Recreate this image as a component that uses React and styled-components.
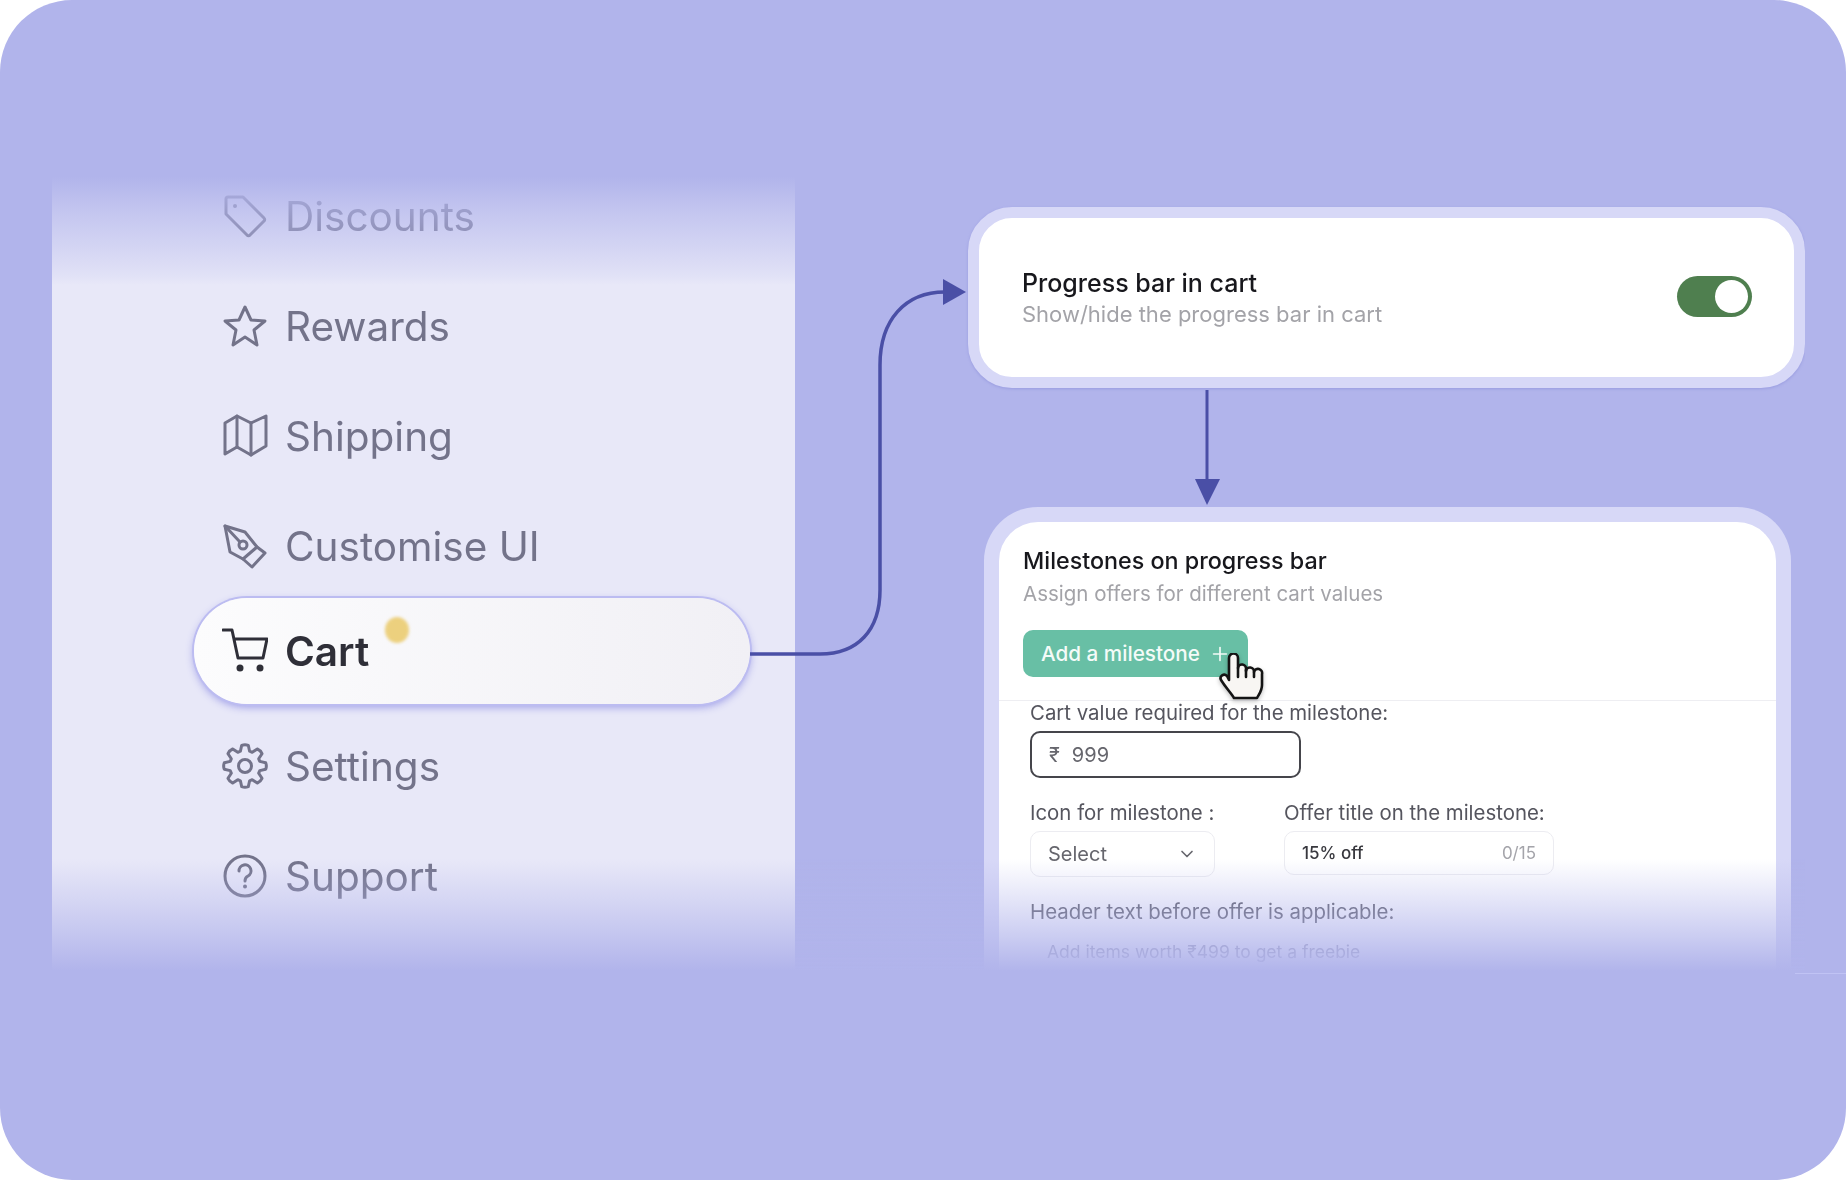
import React from "react"
import styled, { createGlobalStyle } from "styled-components"
import { ChevronDown, Plus } from "lucide-react"

const bg = "#b1b4eb"
const line = "#4a4fa6"

const Global = createGlobalStyle`
  html, body { margin: 0; padding: 0; background: #fff; }
  * { box-sizing: border-box; }
  body { font-family: Inter, "Noto Sans", sans-serif; }
`

const Frame = styled.div`
  position: relative;
  width: 1846px;
  height: 1180px;
  padding: 177px 41px 0 52px;
  background: ${bg};
  border-radius: 72px;
  overflow: hidden;
`

const Stage = styled.div`
  position: relative;
  display: flex;
  height: 794px;
  overflow: hidden;
  filter: blur(0.45px);
`

const Sidebar = styled.nav`
  position: relative;
  display: flex;
  flex-direction: column;
  width: 743px;
  flex-shrink: 0;
  padding-left: 142px;
  background: #e8e8f8;

  &::before {
    content: "";
    position: absolute;
    inset: 0 0 auto 0;
    height: 108px;
    background: linear-gradient(
      to bottom,
      ${bg},
      rgba(177, 180, 235, 0.68) 30%,
      rgba(177, 180, 235, 0.35) 68%,
      rgba(177, 180, 235, 0.12) 92%,
      rgba(177, 180, 235, 0)
    );
    z-index: 1;
  }
`

const NavItem = styled.div`
  position: relative;
  display: flex;
  align-items: center;
  gap: 17px;
  width: 556px;
  height: ${p => (p.$active ? "106px" : "80px")};
  margin-top: ${p => p.$top}px;
  padding-left: 28px;
  border-radius: 53px;
  color: ${p => (p.$active ? "#2f2f38" : "#73738a")};
  font-size: 40.5px;
  font-weight: ${p => (p.$active ? 600 : 400)};
  background: ${p => (p.$active ? "linear-gradient(to right, #fcfcfd, #f1f0f5)" : "transparent")};
  box-shadow: ${p => (p.$active ? "0 0 0 2px #bcbcf1, 0 3px 9px #9a9ae6" : "none")};
`

const NavIcon = styled.svg.attrs({ viewBox: "0 0 46 46", fill: "none" })`
  flex-shrink: 0;
  width: 46px;
  height: 46px;
  stroke: currentColor;
  stroke-width: 3;
  stroke-linejoin: round;
  stroke-linecap: round;
`

const IconDot = styled.circle`
  fill: currentColor;
  stroke: none;
`

const Dot = styled.span`
  position: absolute;
  left: 191px;
  top: 19px;
  width: 24px;
  height: 26px;
  border-radius: 50%;
  background: #ecd07e;
  filter: blur(1.5px);
`

const Column = styled.div`
  display: flex;
  flex-direction: column;
  align-items: flex-start;
  margin-left: 173px;
  width: 837px;
`

const ToggleCard = styled.section`
  display: flex;
  flex-shrink: 0;
  align-items: center;
  justify-content: space-between;
  width: 837px;
  height: 181px;
  margin-top: 30px;
  padding: 0 42px 0 43px;
  background: #fff;
  border: 11px solid #d7d8f7;
  border-radius: 44px;
  box-shadow: 0 1px 3px #9a9de0;
`

const CardTitle = styled.h3`
  margin: 0;
  font-size: ${p => p.$size}px;
  line-height: 28px;
  font-weight: 500;
  color: #17171c;
`

const CardSub = styled.p`
  margin: ${p => p.$gap}px 0 0;
  font-size: ${p => p.$size}px;
  line-height: 26px;
  font-weight: 400;
  color: #a3a3a8;
`

const Toggle = styled.div`
  display: flex;
  align-items: center;
  justify-content: flex-end;
  width: 75px;
  height: 41px;
  margin-bottom: 2px;
  padding-right: 4px;
  border-radius: 21px;
  background: #4f7f4f;
`

const Knob = styled.span`
  width: 33px;
  height: 33px;
  border-radius: 50%;
  background: #fff;
`

const FormCard = styled.section`
  flex-shrink: 0;
  width: 807px;
  height: 560px;
  margin: 119px 0 0 16px;
  padding-top: 25px;
  background: #fff;
  border: 15px solid #d7d8f7;
  border-bottom: none;
  border-radius: 54px 54px 0 0;
`

const CardHead = styled.div`
  padding-left: 24px;
`

const AddButton = styled.div`
  position: relative;
  display: flex;
  align-items: center;
  gap: 9px;
  width: 225px;
  height: 47px;
  margin-top: 23px;
  padding-left: 18px;
  border-radius: 10px;
  background: #68bfa5;
  color: #f4fbf8;
  font-size: 20.7px;
  font-weight: 500;
  white-space: nowrap;
`

const Hand = styled.svg.attrs({ viewBox: "0 0 46 48" })`
  position: absolute;
  left: 196px;
  top: 23px;
  width: 46px;
  height: 48px;
  fill: #f8f6f3;
  stroke: #141414;
  stroke-width: 2.6;
  stroke-linejoin: round;
  stroke-linecap: round;
  filter: drop-shadow(0 2px 2px rgba(0, 0, 0, 0.25));
`

const Divider = styled.hr`
  height: 1px;
  margin: 23px 0 0;
  border: 0;
  background: #eeeef2;
`

const Form = styled.div`
  padding-left: 31px;
`

const Label = styled.label`
  display: block;
  margin-top: ${p => p.$top}px;
  font-size: 20.4px;
  line-height: 24px;
  font-weight: 400;
  white-space: nowrap;
  color: #55555e;
`

const FieldRow = styled.div`
  display: flex;
  gap: 69px;
  margin-top: 23px;
`

const Field = styled.div`
  display: flex;
  align-items: center;
  justify-content: ${p => (p.$spread ? "space-between" : "flex-start")};
  gap: 12px;
  width: ${p => p.$width}px;
  height: ${p => p.$height || 46}px;
  margin-top: 6px;
  padding: 0 17px;
  border: ${p => (p.$strong ? "2px solid #45454b" : "1.5px solid #ececf1")};
  border-radius: 10px;
  font-size: ${p => p.$font || 20}px;
  font-weight: ${p => p.$weight || 400};
  color: ${p => p.$color || "#66666d"};
`

const Counter = styled.span`
  color: #a4a4aa;
  font-size: 17px;
  font-weight: 400;
`

const Placeholder = styled.div`
  margin: 16px 0 0 17px;
  font-size: 17.5px;
  line-height: 24px;
  color: #8b8ba2;
`

const BottomFade = styled.div`
  position: absolute;
  inset: auto 0 0 0;
  height: 112px;
  background: linear-gradient(
    to top,
    ${bg},
    rgba(177, 180, 235, 0.68) 30%,
    rgba(177, 180, 235, 0.3) 68%,
    rgba(177, 180, 235, 0)
  );
  pointer-events: none;
`

const Connectors = styled.svg`
  position: absolute;
  inset: 0;
  pointer-events: none;
`

const EdgeLine = styled.span`
  position: absolute;
  left: 1795px;
  right: 0;
  top: 973px;
  height: 1px;
  background: #c0c3f4;
`

// eight rounded teeth round the middle of the settings icon
const gearPath = () => {
  let d = ""
  for (let i = 0; i < 8; i++) {
    const a = (i * Math.PI) / 4 - Math.PI / 2
    const pt = (r, off) => {
      const x = 23 + r * Math.cos(a + off)
      const y = 23 + r * Math.sin(a + off)
      return `${x.toFixed(1)} ${y.toFixed(1)}`
    }
    d += `${i === 0 ? "M" : "L"}${pt(15.5, -0.3)} L${pt(21, -0.16)} Q${pt(22, 0)} ${pt(21, 0.16)} L${pt(15.5, 0.3)} `
  }
  return d + "Z"
}

const TagIcon = () => (
  <NavIcon>
    <path d="M6 4 H21 L42 25 a2 2 0 0 1 0 3 L28 42 a2 2 0 0 1 -3 0 L4 21 V6 a2 2 0 0 1 2 -2 Z" />
    <IconDot cx="13" cy="13" r="2" />
  </NavIcon>
)

const StarIcon = () => (
  <NavIcon>
    <polygon points="23,4 29,17 43,18 32,27 35,42 23,34 11,42 14,27 3,18 17,17" />
  </NavIcon>
)

const MapIcon = () => (
  <NavIcon>
    <polygon points="3,10 15,3 29,10 44,3 44,33 29,42 15,34 3,41" />
    <path d="M15 3 V34 M29 10 V42" />
  </NavIcon>
)

const PenIcon = () => (
  <NavIcon>
    <path d="M3 3 L23 9 L35 24 L21 36 L8 29 Z" />
    <path d="M35 24 L43 30 L30 44 L21 36" />
    <path d="M3 3 L18 19" />
    <circle cx="21" cy="22" r="4" />
  </NavIcon>
)

const CartIcon = () => (
  <NavIcon>
    <path d="M1 2 H10 L16 30 H41 L45 11 H13" />
    <IconDot cx="18" cy="40" r="3.5" />
    <IconDot cx="38" cy="40" r="3.5" />
  </NavIcon>
)

const GearIcon = () => (
  <NavIcon>
    <path d={gearPath()} />
    <circle cx="23" cy="23" r="6.5" />
  </NavIcon>
)

const HelpIcon = () => (
  <NavIcon>
    <circle cx="23" cy="23" r="20" />
    <path d="M17 18 a6 6 0 1 1 9 5 c-2 1 -3 2.5 -3 5" />
    <IconDot cx="23" cy="33.5" r="2" />
  </NavIcon>
)

const items = [
  { label: "Discounts", Icon: TagIcon, top: -1 },
  { label: "Rewards", Icon: StarIcon, top: 30 },
  { label: "Shipping", Icon: MapIcon, top: 30 },
  { label: "Customise UI", Icon: PenIcon, top: 30 },
  { label: "Cart", Icon: CartIcon, top: 12, active: true },
  { label: "Settings", Icon: GearIcon, top: 22 },
  { label: "Support", Icon: HelpIcon, top: 30 },
]

const App = () => (
  <Frame>
    <Global />
    <Stage>
      <Sidebar>
        {items.map(({ label, Icon, top, active }) => (
          <NavItem key={label} $top={top} $active={active}>
            <Icon />
            {label}
            {active && <Dot />}
          </NavItem>
        ))}
      </Sidebar>
      <Column>
        <ToggleCard>
          <div>
            <CardTitle $size={25}>Progress bar in cart</CardTitle>
            <CardSub $size={22} $gap={4}>Show/hide the progress bar in cart</CardSub>
          </div>
          <Toggle>
            <Knob />
          </Toggle>
        </ToggleCard>
        <FormCard>
          <CardHead>
            <CardTitle $size={23.3}>Milestones on progress bar</CardTitle>
            <CardSub $size={20.5} $gap={6}>Assign offers for different cart values</CardSub>
            <AddButton>
              Add a milestone
              <Plus size={22} strokeWidth={1.8} />
              <Hand>
                <path d="M10 27 V5 a4.5 4.5 0 0 1 9 0 V15 a4 4 0 0 1 8 1 V18 a4 4 0 0 1 8 1 a4 4 0 0 1 8 2 V32 c0 6 -3 9 -5 13 H15 c-3 -5 -8 -10 -13 -18 c-2 -4 3 -7 6 -4 l2 4 Z" />
                <path d="M19 15 V24 M27 17 V24 M35 19 V24" fill="none" />
              </Hand>
            </AddButton>
          </CardHead>
          <Divider />
          <Form>
            <Label $top={0}>Cart value required for the milestone:</Label>
            <Field $strong $width={271} $height={47}>
              <span>₹</span>
              <span>999</span>
            </Field>
            <FieldRow>
              <div>
                <Label $top={0}>Icon for milestone :</Label>
                <Field $width={185} $spread>
                  Select
                  <ChevronDown size={20} strokeWidth={2} />
                </Field>
              </div>
              <div>
                <Label $top={0}>Offer title on the milestone:</Label>
                <Field $width={270} $height={44} $spread $font={17} $weight={500} $color="#38383e">
                  15% off
                  <Counter>0/15</Counter>
                </Field>
              </div>
            </FieldRow>
            <Label $top={23}>Header text before offer is applicable:</Label>
            <Placeholder>Add items worth ₹499 to get a freebie</Placeholder>
          </Form>
        </FormCard>
      </Column>
      <BottomFade />
    </Stage>
    <Connectors width="1846" height="1180" viewBox="0 0 1846 1180" fill="none">
      <path
        d="M750 654 H820 C858 654 880 630 880 590 V365 C880 320 905 292 945 292"
        stroke={line}
        strokeWidth="3.5"
      />
      <polygon points="943,279 966,292 943,305" fill={line} />
      <path d="M1207 390 V480" stroke={line} strokeWidth="3" />
      <polygon points="1195,479 1220,479 1207,505" fill={line} />
    </Connectors>
    <EdgeLine />
  </Frame>
)

export default App
